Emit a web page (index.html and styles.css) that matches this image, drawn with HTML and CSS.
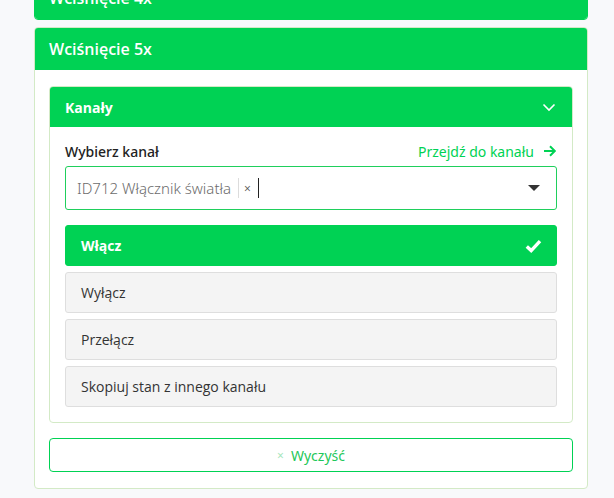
FILE: index.html
```html
<!DOCTYPE html>
<html lang="pl">
<head>
<meta charset="utf-8">
<title>Akcje przycisku</title>
<link rel="stylesheet" href="styles.css">
</head>
<body>
<div class="page">
  <section class="card card-prev">
    <header class="card-head">Wciśnięcie 4x</header>
  </section>

  <section class="card">
    <header class="card-head">Wciśnięcie 5x</header>
    <div class="card-body">
      <div class="panel">
        <header class="panel-head">
          <span>Kanały</span>
          <svg class="chev" width="14" height="9" viewBox="0 0 14 9"><path d="M1.5 1.5 7 7l5.5-5.5" fill="none" stroke="#fff" stroke-width="1.6"/></svg>
        </header>
        <div class="panel-body">
          <div class="label-row">
            <span class="label">Wybierz kanał</span>
            <a class="goto">Przejdź do kanału
              <svg width="14" height="12" viewBox="0 0 14 12"><path d="M1 6h11M7 1.3 11.8 6 7 10.7" fill="none" stroke="#00d254" stroke-width="2"/></svg>
            </a>
          </div>
          <div class="select">
            <span class="value">ID712 Włącznik światła</span>
            <span class="clear">×</span>
            <span class="caret"></span>
            <span class="tri"></span>
          </div>
          <ul class="options">
            <li class="opt active">Włącz
              <svg class="check" width="17" height="14" viewBox="0 0 17 14"><path d="M1.8 7.5 6.2 11.6 15 2.2" fill="none" stroke="#fff" stroke-width="3.4"/></svg>
            </li>
            <li class="opt">Wyłącz</li>
            <li class="opt">Przełącz</li>
            <li class="opt">Skopiuj stan z innego kanału</li>
          </ul>
        </div>
      </div>
      <button class="btn-clear"><span class="x">×</span>Wyczyść</button>
    </div>
  </section>
</div>
</body>
</html>
```

FILE: styles.css
```css
* { box-sizing: border-box; }

html, body {
  margin: 0;
  background: #f8f9fb;
  font-family: "Open Sans", "Noto Sans", sans-serif;
}

.page {
  width: 554px;
  margin-left: 34px;
  margin-top: -24px;
}

.card {
  background: #fff;
  border: 1px solid #d3eac6;
  border-radius: 4px;
  margin-bottom: 7px;
  overflow: hidden;
}

.card-prev {
  border-color: #00d254;
}

.card-head {
  background: #00d254;
  color: #fff;
  height: 42px;
  display: flex;
  align-items: center;
  padding: 0 14px;
  font-size: 16px;
  font-weight: 600;
}

.card-body {
  padding: 16px 14px 16px;
}

.panel {
  border: 1px solid #d3eac6;
  border-radius: 4px;
  overflow: hidden;
}

.panel-head {
  background: #00d254;
  color: #fff;
  height: 40px;
  display: flex;
  align-items: center;
  justify-content: space-between;
  padding: 0 16px 0 15px;
  font-size: 14px;
  font-weight: 700;
}

.chev { margin-top: 1px; }

.panel-body {
  padding: 14px 15px 15px;
}

.label-row {
  display: flex;
  justify-content: space-between;
  align-items: center;
  height: 20px;
  margin-bottom: 5px;
}

.label {
  font-family: "Noto Sans", sans-serif;
  font-size: 14px;
  font-weight: 500;
  color: #222;
}

.goto {
  font-family: "Noto Sans", sans-serif;
  font-size: 14px;
  color: #00d254;
  display: flex;
  align-items: center;
  gap: 9px;
}

.select {
  height: 44px;
  border: 1px solid #1fcf5c;
  border-radius: 3px;
  display: flex;
  align-items: center;
  padding: 0 16px 0 11px;
}

.value {
  font-family: "Noto Sans", sans-serif;
  font-size: 15px;
  font-weight: 300;
  color: #6c6c6c;
  padding-right: 7px;
  border-right: 1px solid #dcdcdc;
  line-height: 20px;
}

.clear {
  font-size: 12px;
  color: #555;
  padding: 0 7px 0 5px;
}

.caret {
  width: 1px;
  height: 20px;
  background: #222;
}

.tri {
  margin-left: auto;
  width: 0;
  height: 0;
  border-left: 6px solid transparent;
  border-right: 6px solid transparent;
  border-top: 6px solid #333;
}

.options {
  list-style: none;
  margin: 15px 0 0;
  padding: 0;
  display: flex;
  flex-direction: column;
  gap: 6px;
}

.opt {
  height: 41px;
  background: #f4f4f4;
  border: 1px solid #dedede;
  border-radius: 3px;
  display: flex;
  align-items: center;
  justify-content: space-between;
  padding: 0 14px 0 15px;
  font-size: 14px;
  color: #333;
}

.opt.active {
  background: #00d254;
  border-color: #00d254;
  color: #fff;
  font-weight: 700;
}

.btn-clear {
  display: flex;
  justify-content: center;
  align-items: center;
  width: 100%;
  height: 34px;
  margin-top: 15px;
  background: #fff;
  border: 1px solid #00d254;
  border-radius: 4px;
  font-family: "Noto Sans", sans-serif;
  font-size: 14px;
  color: #1fc85a;
  cursor: pointer;
}

.btn-clear .x {
  color: #a7e6bd;
  font-size: 12px;
  margin-right: 7px;
}
```
